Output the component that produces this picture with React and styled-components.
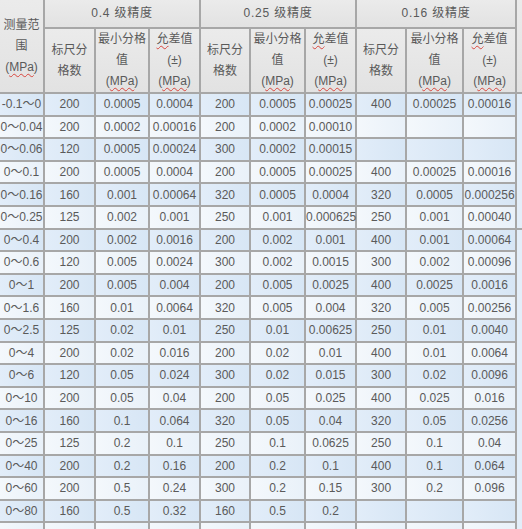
import React from 'react';
import styled, { createGlobalStyle } from 'styled-components';

const GlobalStyle = createGlobalStyle`
    html, body {
        margin: 0;
        padding: 0;
        background: #ffffff;
        overflow: hidden;
    }
`;

const widths = [43, 49, 52, 49, 48, 53, 49, 48, 55, 51, 30];
const tableWidth = widths.reduce((a, b) => a + b, 0) + (widths.length + 1) * 2;

const Frame = styled.div`
    width: 100vw;
    height: 100vh;
    overflow: hidden;
`;

const Table = styled.table`
    width: ${tableWidth}px;
    margin: -2px 0 0 -2px;
    table-layout: fixed;
    border-collapse: separate;
    border-spacing: 2px;
    background: #a7a7a7;
    font-family: "Liberation Sans", "Noto Sans CJK SC", sans-serif;
    font-size: 12px;
    color: #5a5a5a;
`;

const Col = styled.col`
    width: ${(p) => p.$w}px;
`;

const HeadRow = styled.tr`
    height: ${(p) => p.$h}px;
`;

const HeadCell = styled.th`
    padding: 0;
    font-weight: normal;
    text-align: center;
    vertical-align: middle;
    line-height: 21px;
    background: linear-gradient(180deg, #ebebeb 0%, #e2e2e2 100%);
    color: #5a5a5a;
    white-space: nowrap;
`;

const GroupTitle = styled.span`
    letter-spacing: 0.8px;
`;

const Wavy = styled.span`
    text-decoration: underline wavy #d9463e;
    text-decoration-thickness: 1px;
    text-underline-offset: 2px;
`;

const DataRow = styled.tr`
    height: 20.6px;
`;

const Cell = styled.td`
    padding: 0;
    text-align: center;
    vertical-align: middle;
    white-space: nowrap;
    line-height: 14px;
    background: ${(p) => p.$blue
        ? 'linear-gradient(90deg, #e2edf9 0%, #d7e6f5 100%)'
        : 'linear-gradient(90deg, #f4f8fc 0%, #e9f1f9 100%)'};
`;

const SideCell = styled.td`
    padding: 0;
    background: #e3eef9;
`;

const rows = [
    ['-0.1～0', '200', '0.0005', '0.0004', '200', '0.0005', '0.00025', '400', '0.00025', '0.00016'],
    ['0～0.04', '200', '0.0002', '0.00016', '200', '0.0002', '0.00010', '', '', ''],
    ['0～0.06', '120', '0.0005', '0.00024', '300', '0.0002', '0.00015', '', '', ''],
    ['0～0.1', '200', '0.0005', '0.0004', '200', '0.0005', '0.00025', '400', '0.00025', '0.00016'],
    ['0～0.16', '160', '0.001', '0.00064', '320', '0.0005', '0.0004', '320', '0.0005', '0.000256'],
    ['0～0.25', '125', '0.002', '0.001', '250', '0.001', '0.000625', '250', '0.001', '0.00040'],
    ['0～0.4', '200', '0.002', '0.0016', '200', '0.002', '0.001', '400', '0.001', '0.00064'],
    ['0～0.6', '120', '0.005', '0.0024', '300', '0.002', '0.0015', '300', '0.002', '0.00096'],
    ['0～1', '200', '0.005', '0.004', '200', '0.005', '0.0025', '400', '0.0025', '0.0016'],
    ['0～1.6', '160', '0.01', '0.0064', '320', '0.005', '0.004', '320', '0.005', '0.00256'],
    ['0～2.5', '125', '0.02', '0.01', '250', '0.01', '0.00625', '250', '0.01', '0.0040'],
    ['0～4', '200', '0.02', '0.016', '200', '0.02', '0.01', '400', '0.01', '0.0064'],
    ['0～6', '120', '0.05', '0.024', '300', '0.02', '0.015', '300', '0.02', '0.0096'],
    ['0～10', '200', '0.05', '0.04', '200', '0.05', '0.025', '400', '0.025', '0.016'],
    ['0～16', '160', '0.1', '0.064', '320', '0.05', '0.04', '320', '0.05', '0.0256'],
    ['0～25', '125', '0.2', '0.1', '250', '0.1', '0.0625', '250', '0.1', '0.04'],
    ['0～40', '200', '0.2', '0.16', '200', '0.2', '0.1', '400', '0.1', '0.064'],
    ['0～60', '200', '0.5', '0.24', '300', '0.2', '0.15', '300', '0.2', '0.096'],
    ['0～80', '160', '0.5', '0.32', '160', '0.5', '0.2', '', '', ''],
    ['', '', '', '', '', '', '', '', '', ''],
];

const groups = ['0.4 级精度', '0.25 级精度', '0.16 级精度'];

const SubHeads = () => (
    <>
        <HeadCell>标尺分<br />格数</HeadCell>
        <HeadCell>最小分格<br />值<br />(<Wavy>MPa</Wavy>)</HeadCell>
        <HeadCell><Wavy>允</Wavy>差值<br />(±)<br />(<Wavy>MPa</Wavy>)</HeadCell>
    </>
);

const App = () => {
    return (
        <Frame>
            <GlobalStyle />
            <Table>
                <colgroup>
                    {widths.map((w, i) => <Col key={i} $w={w} />)}
                </colgroup>
                <thead>
                    <HeadRow $h={27}>
                        <HeadCell rowSpan={2}>测量范<br />围<br />(<Wavy>MPa</Wavy>)</HeadCell>
                        {groups.map((g) => (
                            <HeadCell key={g} colSpan={3}><GroupTitle>{g}</GroupTitle></HeadCell>
                        ))}
                        <HeadCell rowSpan={2}></HeadCell>
                    </HeadRow>
                    <HeadRow $h={62}>
                        <SubHeads />
                        <SubHeads />
                        <SubHeads />
                    </HeadRow>
                </thead>
                <tbody>
                    {rows.map((row, r) => (
                        <DataRow key={r}>
                            {row.map((v, c) => (
                                <Cell key={c} $blue={r % 2 === 0}>{v}</Cell>
                            ))}
                            {r === 0 && <SideCell rowSpan={6} />}
                            {r === 6 && <SideCell rowSpan={14} />}
                        </DataRow>
                    ))}
                </tbody>
            </Table>
        </Frame>
    );
};

export default App;
